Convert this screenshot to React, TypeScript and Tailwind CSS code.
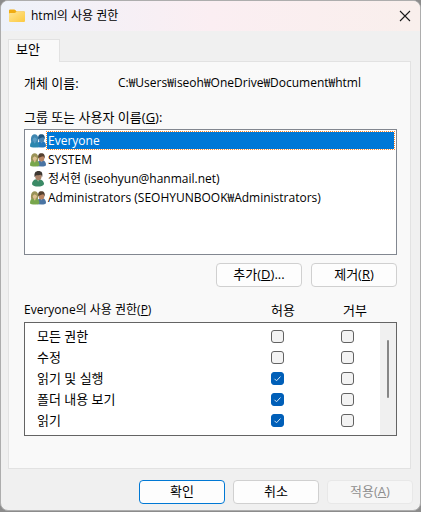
import { useState, type ReactNode } from "react";

type Person = "group" | "user";

const principals: { name: string; kind: Person }[] = [
  { name: "Everyone", kind: "group" },
  { name: "SYSTEM", kind: "group" },
  { name: "정서현 (iseohyun@hanmail.net)", kind: "user" },
  { name: "Administrators (SEOHYUNBOOK₩Administrators)", kind: "group" },
];

const permissions = [
  { name: "모든 권한", allow: false },
  { name: "수정", allow: false },
  { name: "읽기 및 실행", allow: true },
  { name: "폴더 내용 보기", allow: true },
  { name: "읽기", allow: true },
];

function FolderIcon() {
  return (
    <svg viewBox="0 0 16 14" className="h-3.5 w-4 shrink-0" aria-hidden="true">
      <defs>
        <linearGradient id="folder" x1="0" y1="0" x2="1" y2="1">
          <stop offset="0" stopColor="#ffe594" />
          <stop offset="1" stopColor="#fcc93f" />
        </linearGradient>
      </defs>
      <path d="M0 1.700C0 .9.600.5 1.300.5h3.900c.5 0 .8.2 1.100.5L7.700 2.500H14.700c.8 0 1.300.5 1.300 1.200V8H0z" fill="#f0ac12" />
      <path d="M0 4.800C0 4.200.4 3.900 1 3.900h4.600c.4 0 .7-.1 1-.4l.8-.7c.2-.2.500-.3.800-.3h6.500c.8 0 1.300.5 1.300 1.200v8c0 .8-.5 1.300-1.300 1.300H1.300C.5 13 0 12.500 0 11.700z" fill="url(#folder)" />
    </svg>
  );
}

function GroupIcon({ selected }: { selected: boolean }) {
  const c = selected
    ? { hairA: "#3f86b0", faceA: "#5c9dc4", bodyA: "#2b86ae", hairB: "#1d5580", faceB: "#4a86b4", bodyB: "#2277bd", collar: "#6fa9d2" }
    : { hairA: "#9a9358", faceA: "#dcc193", bodyA: "#78a64c", hairB: "#54402f", faceB: "#b98462", bodyB: "#4a74a3", collar: "#9db4c9" };
  return (
    <svg viewBox="0 0 16 16" className="size-4 shrink-0" aria-hidden="true">
      <path d="M7 14.200c.1-3.500 1-5.300 2.900-5.900h3c2 .5 3.100 2.200 3.100 5-.5.900-2.200 1.300-4.200 1.300z" fill={c.bodyB} />
      <path d="M10.700 8.500l.8 2 .8-2z" fill={c.collar} />
      <ellipse cx="11.500" cy="5.900" rx="2.800" ry="3.500" fill={c.faceB} />
      <path d="M8.300 6.600C7.600 3.200 8.800 1.200 11.300 1.200c2.800 0 4 2 3.400 5.600-.3-1.200-.7-2.100-1.500-2.500-1.400.5-3.500.5-4.900 2.300z" fill={c.hairB} />
      <path d="M0 13.200c0-2.800 1-4.400 3-4.900h2.900c2.200.3 3.500 1.800 3.600 5-.8 1-2.500 1.300-4.700 1.300C2.300 14.600.6 14.200 0 13.200z" fill={c.bodyA} />
      <path d="M1.300 9.300C.6 6.900.5 1.200 4.700 1.200c4.100 0 3.900 5.600 3.100 8.100z" fill={c.hairA} />
      <path d="M3.400 8.500h2.500l-1 2.300z" fill={c.faceA} />
      <ellipse cx="4.800" cy="6.200" rx="2" ry="2.700" fill={c.faceA} />
      <path d="M2.600 5.700C2.800 3.500 4 3 5 3.100s1.800.8 2 2.300c-1.100-.2-1.800-.7-2.200-1.200-.5.7-1.200 1.100-2.200 1.500z" fill={c.hairA} />
    </svg>
  );
}

function UserIcon() {
  return (
    <svg viewBox="0 0 16 16" className="size-4 shrink-0" aria-hidden="true">
      <path d="M2 13.200c.1-2.700 1.500-4.400 4-4.900h3.200c3 .4 4.600 2.200 4.900 4.700-.8 1.900-3.200 2.600-6.200 2.600-2.800 0-5.200-.7-5.900-2.400z" fill="#3b8a66" />
      <path d="M6.600 8.500h2.600l-1 2.200z" fill="#9dbda6" />
      <ellipse cx="8.400" cy="5.300" rx="3.200" ry="4" fill="#a98268" />
      <path d="M4.700 6.200C3.800 2 5.500 0 8.500 0c3.200 0 4.600 2 3.600 6.300-.2-1.200-.6-2.100-1.300-2.500-1.700.7-3.900-.1-4.900.8-.5.400-.8.900-1.200 1.600z" fill="#3e3832" />
    </svg>
  );
}

function Key({ children }: { children: string }) {
  return (
    <>
      (<u className="underline-offset-1">{children}</u>)
    </>
  );
}

function DialogButton({
  children,
  primary,
  disabled,
}: {
  children: ReactNode;
  primary?: boolean;
  disabled?: boolean;
}) {
  return (
    <button
      type="button"
      disabled={disabled}
      className={`h-6 w-[86px] rounded border pb-0.5 text-center ${
        primary
          ? "border-[#0078d4] bg-[#fdfdfd]"
          : disabled
            ? "border-[#e8e8e8] bg-[#f6f6f6] text-[#8e8e8e]"
            : "border-[#d0d0d0] bg-[#fdfdfd]"
      }`}
    >
      {children}
    </button>
  );
}

function CheckBox({ label, initial }: { label: string; initial: boolean }) {
  const [checked, setChecked] = useState(initial);
  return (
    <span className="grid size-[13px] place-items-center">
      <input
        type="checkbox"
        aria-label={label}
        checked={checked}
        onChange={(e) => setChecked(e.target.checked)}
        className="col-start-1 row-start-1 size-[13px] appearance-none rounded-[3px] border border-[#626262] bg-[#f3f3f3] checked:border-[#005fb8] checked:bg-[#005fb8]"
      />
      {checked && (
        <svg viewBox="0 0 13 13" className="pointer-events-none col-start-1 row-start-1 size-[13px]" aria-hidden="true">
          <path d="M3.500 6.800l2 2 4-4.300" fill="none" stroke="#d5e6f5" />
        </svg>
      )}
    </span>
  );
}

export default function App() {
  const [selected, setSelected] = useState(0);

  return (
    <div className="flex min-h-screen bg-[#8c8c8c] pb-px font-['Open_Sans','Noto_Sans_CJK_KR',sans-serif] text-[13px] leading-4 whitespace-nowrap text-black">
      <main className="flex flex-1 flex-col overflow-hidden rounded-lg border border-[#adadad] bg-[#f0f0f0]">
        <header className="flex h-[30px] items-center justify-between bg-linear-to-r from-[#eef2fa] via-[#fbeef2] to-[#f9efec] pr-[7px] pl-2">
          <div className="flex items-center gap-1.5">
            <FolderIcon />
            <h1 className="text-xs">html의 사용 권한</h1>
          </div>
          <button type="button" aria-label="닫기" className="grid size-4 place-items-center">
            <svg viewBox="0 0 12 12" className="size-3" aria-hidden="true">
              <path d="M1 1l10 10M11 1L1 11" stroke="#1a1a1a" strokeWidth="1.100" fill="none" />
            </svg>
          </button>
        </header>

        <div className="flex flex-1 flex-col pt-2 pr-[9px] pl-[7px]">
          <div role="tablist" className="flex">
            <button
              type="button"
              role="tab"
              aria-selected="true"
              className="z-10 -mb-px h-[23px] w-[52px] border border-b-0 border-[#e2e2e2] bg-[#f9f9f9] pb-1 pl-[7px] text-left"
            >
              보안
            </button>
          </div>

          <section role="tabpanel" className="flex flex-1 flex-col border border-[#e2e2e2] bg-[#f9f9f9] pt-[13px] pr-[13px] pb-8 pl-[15px]">
            <dl className="flex">
              <dt className="w-[94px]">개체 이름:</dt>
              <dd className="text-xs leading-4">C:₩Users₩iseoh₩OneDrive₩Document₩html</dd>
            </dl>

            <h2 id="principals" className="mt-[18px]">
              그룹 또는 사용자 이름
              <Key>G</Key>:
            </h2>
            <ul
              role="listbox"
              aria-labelledby="principals"
              className="mt-1 h-[126px] border border-[#828790] bg-white p-px text-xs"
            >
              {principals.map((p, i) => (
                <li
                  key={p.name}
                  role="option"
                  aria-selected={i === selected}
                  onClick={() => setSelected(i)}
                  className="flex h-[19px] items-center pl-1"
                >
                  {p.kind === "group" ? <GroupIcon selected={i === selected} /> : <UserIcon />}
                  <span
                    className={`h-[19px] flex-1 border pt-px pl-px ${
                      i === selected
                        ? "border-dotted border-[#ff8728] bg-[#0078d7] bg-clip-padding text-white"
                        : "border-transparent"
                    }`}
                  >
                    {p.name}
                  </span>
                </li>
              ))}
            </ul>

            <div className="mt-2 flex justify-end gap-[9px]">
              <DialogButton>
                추가
                <Key>D</Key>...
              </DialogButton>
              <DialogButton>
                제거
                <Key>R</Key>
              </DialogButton>
            </div>

            <div className="mt-[15px] flex">
              <h2 id="permissions" className="flex-1 text-xs">
                Everyone의 사용 권한
                <Key>P</Key>
              </h2>
              <span className="w-[72px]">허용</span>
              <span className="w-[54px]">거부</span>
            </div>
            <div className="mt-1 flex h-[114px] overflow-hidden border border-[#646464] bg-white">
              <table aria-labelledby="permissions" className="mt-[3px] h-[105px] flex-1 table-fixed">
                <tbody>
                  {permissions.map((p) => (
                    <tr key={p.name} className="h-[21px]">
                      <th scope="row" className="p-0 pb-0.5 pl-3 text-left font-normal">
                        {p.name}
                      </th>
                      <td className="w-[70px] p-0">
                        <CheckBox label={`${p.name} 허용`} initial={p.allow} />
                      </td>
                      <td className="w-[39px] p-0">
                        <CheckBox label={`${p.name} 거부`} initial={false} />
                      </td>
                    </tr>
                  ))}
                </tbody>
              </table>
              <div className="w-4 bg-[#f0f0f0] pt-[17px] pl-[7px]" aria-hidden="true">
                <div className="h-[58px] w-0.5 rounded-full bg-[#868686]" />
              </div>
            </div>
          </section>
        </div>

        <footer className="flex justify-end gap-2 pt-[11px] pr-[7px] pb-[6px]">
          <DialogButton primary>확인</DialogButton>
          <DialogButton>취소</DialogButton>
          <DialogButton disabled>
            적용
            <Key>A</Key>
          </DialogButton>
        </footer>
      </main>
    </div>
  );
}
